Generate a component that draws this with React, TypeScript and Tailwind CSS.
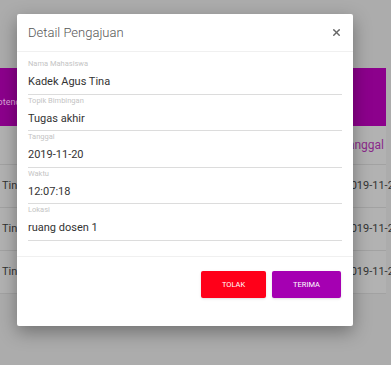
import { X } from "lucide-react";

const fields = [
  { label: "Nama Mahasiswa", value: "Kadek Agus Tina" },
  { label: "Topik Bimbingan", value: "Tugas akhir" },
  { label: "Tanggal", value: "2019-11-20" },
  { label: "Waktu", value: "12:07:18" },
  { label: "Lokasi", value: "ruang dosen 1" },
];

const rows = ["2019-11-20", "2019-11-20", "2019-11-20"];

export default function App() {
  return (
    <div
      className="relative w-[391px] h-[365px] overflow-hidden bg-[#acacac]"
      style={{ fontFamily: "Roboto, 'Liberation Sans', sans-serif" }}
    >
      {/* halaman di belakang modal */}
      <div className="flex flex-col">
        <div className="h-[68px]" />
        <div className="flex items-center h-[58px] w-[386px] bg-[#8c018c] pt-[12px]">
          <span className="text-[9px] text-[#d9a6d9] -ml-[8px]">Potencial</span>
        </div>
        <div className="flex flex-col bg-[#b2b2b2] w-[386px]">
          <div className="flex justify-end items-center h-[39px] border-b border-[#a2a2a2] pr-[2px]">
            <span className="text-[12px] text-[#8a2a8a]">Tanggal</span>
          </div>
          {rows.map((r, i) => (
            <div
              key={i}
              className="flex justify-between items-center h-[43px] border-b border-[#a2a2a2] pl-[2px]"
            >
              <span className="text-[11px] text-[#333]">Tina</span>
              <span className="text-[11px] text-[#333] -mr-[14px]">{r}</span>
            </div>
          ))}
        </div>
      </div>

      {/* modal detail */}
      <div className="absolute left-[17px] top-[14px] w-[336px] h-[312px] bg-white rounded-[2px] shadow-[0_6px_18px_rgba(0,0,0,0.35)] flex flex-col">
        <div className="flex items-center justify-between h-[38px] pl-[11px] pr-[11px] border-b border-[#f0f0f0]">
          <span className="text-[13px] font-light text-[#555]">Detail Pengajuan</span>
          <X size={11} strokeWidth={3} className="text-[#666]" />
        </div>
        <div className="flex flex-col px-[11px] pt-[6px] h-[205px] border-b border-[#f0f0f0]">
          {fields.map((f) => (
            <div key={f.label} className="flex flex-col h-[36.5px] border-b border-[#dcdcdc]">
              <span className="text-[7.5px] text-[#c4c4c4] leading-[9px] mt-[1px]">{f.label}</span>
              <span className="text-[11px] text-[#333] leading-[13px] mt-[7px]">{f.value}</span>
            </div>
          ))}
        </div>
        <div className="flex justify-end gap-[6px] pr-[12px] pt-[14px]">
          <button className="w-[65px] h-[27px] rounded-[2px] bg-[#ff0019] text-white text-[7.5px] uppercase shadow-sm">
            Tolak
          </button>
          <button className="w-[69px] h-[27px] rounded-[2px] bg-[#a500b2] text-white text-[7.5px] uppercase shadow-sm">
            Terima
          </button>
        </div>
      </div>
    </div>
  );
}
